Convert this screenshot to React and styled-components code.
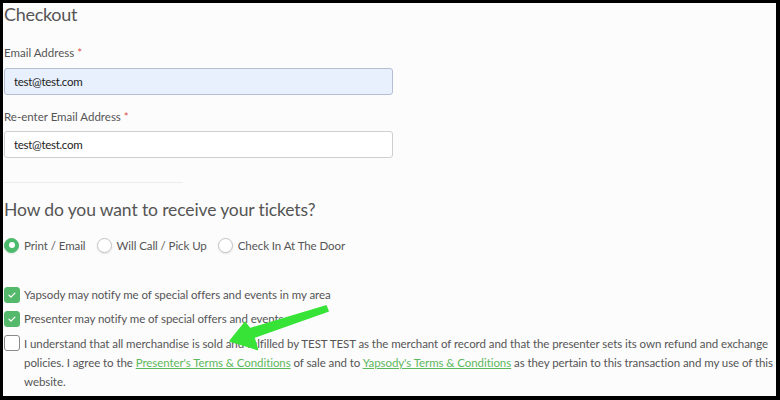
import styled, { createGlobalStyle } from "styled-components";

const GlobalStyle = createGlobalStyle`
  html, body {
    margin: 0;
    padding: 0;
    background: #000;
  }
  * {
    box-sizing: border-box;
  }
`;

const deliveryOptions = ["Print / Email", "Will Call / Pick Up", "Check In At The Door"];

const App = () => {
  return (
    <>
      <GlobalStyle />
      <Frame>
        <Title>Checkout</Title>
        <Label $top={20} $bottom={7}>
          Email Address <Required>*</Required>
        </Label>
        <Input $autofill defaultValue="test@test.com" />
        <Label $top={14} $bottom={6}>
          Re-enter Email Address <Required>*</Required>
        </Label>
        <Input defaultValue="test@test.com" />
        <Divider />
        <Heading>How do you want to receive your tickets?</Heading>
        <RadioRow>
          {deliveryOptions.map((opt, idx) => (
            <RadioOption key={opt}>
              <Radio $checked={idx === 0} />
              {opt}
            </RadioOption>
          ))}
        </RadioRow>
        <Options>
          <CheckRow>
            <Checkbox $checked>
              <CheckMark />
            </Checkbox>
            <CheckText>Yapsody may notify me of special offers and events in my area</CheckText>
          </CheckRow>
          <CheckRow>
            <Checkbox $checked>
              <CheckMark />
            </Checkbox>
            <CheckText>Presenter may notify me of special offers and events</CheckText>
          </CheckRow>
          <CheckRow>
            <Checkbox />
            <AgreeText>
              I understand that all merchandise is sold and fulfilled by TEST TEST as the merchant of
              record and that the presenter sets its own refund and exchange policies. I agree to the{" "}
              <Link>Presenter's Terms &amp; Conditions</Link> of sale and to{" "}
              <Link>Yapsody's Terms &amp; Conditions</Link> as they pertain to this transaction and my
              use of this website.
            </AgreeText>
          </CheckRow>
        </Options>
        <Arrow />
      </Frame>
    </>
  );
};

export default App;

const CheckMark = () => (
  <svg width="10" height="10" viewBox="0 0 24 24" fill="none" stroke="#fff" strokeWidth="3" strokeLinecap="round" strokeLinejoin="round">
    <path d="M5 12.5l4.5 4.5L19 7.5" />
  </svg>
);

// annotation arrow drawn over the page
const Arrow = () => (
  <ArrowSvg viewBox="3 3 773 393" width="773" height="393">
    <polygon
      points="326,305.8 250,328.6 245,322.5 230,341 257.5,349.5 254,337.4 328.2,311.2"
      fill="#37e337"
      stroke="#37e337"
      strokeWidth="1.4"
      strokeLinejoin="round"
    />
  </ArrowSvg>
);

const Frame = styled.div`
  position: relative;
  margin: 3px 4px 4px 3px;
  height: 393px;
  overflow: hidden;
  background: #fcfcfc;
  padding-left: 1px;
  font-family: Lato, "Open Sans", sans-serif;
  color: #555;
`;

const Title = styled.h1`
  margin: 0;
  font-size: 18px;
  line-height: 22px;
  letter-spacing: -0.3px;
  font-weight: 400;
  color: #555;
`;

const Label = styled.div`
  margin-top: ${(p) => p.$top}px;
  margin-bottom: ${(p) => p.$bottom}px;
  font-size: 11.5px;
  line-height: 16px;
`;

const Required = styled.span`
  color: #d9534f;
`;

const Input = styled.input`
  display: block;
  width: 389px;
  height: 27px;
  padding: 0 9px;
  border: 1px solid ${(p) => (p.$autofill ? "#b4bfd1" : "#cfcfcf")};
  border-radius: 3px;
  background: ${(p) => (p.$autofill ? "#e8f0fe" : "#fff")};
  font-family: Lato, "Open Sans", sans-serif;
  font-size: 11.5px;
  letter-spacing: -0.3px;
  color: #222;
  outline: none;
`;

const Divider = styled.div`
  width: 179px;
  height: 1px;
  margin-top: 24px;
  background: #ececec;
`;

const Heading = styled.h2`
  margin: 15px 0 0;
  font-size: 17.5px;
  line-height: 24px;
  letter-spacing: -0.12px;
  font-weight: 400;
  color: #555;
`;

const RadioRow = styled.div`
  display: flex;
  align-items: center;
  gap: 11px;
  margin-top: 14px;
  height: 18px;
`;

const RadioOption = styled.label`
  display: flex;
  align-items: center;
  gap: 5px;
  font-size: 11.5px;
  letter-spacing: -0.07px;
  color: #555;
`;

const Radio = styled.span`
  position: relative;
  width: 15px;
  height: 15px;
  border-radius: 50%;
  border: 1px solid ${(p) => (p.$checked ? "#4cbb6c" : "#c4c4c4")};
  background: ${(p) => (p.$checked ? "#4cbb6c" : "#fff")};
  box-shadow: 0 1px 2px rgba(0, 0, 0, 0.1);
  &::after {
    content: "";
    display: ${(p) => (p.$checked ? "block" : "none")};
    position: absolute;
    left: 50%;
    top: 50%;
    width: 6px;
    height: 6px;
    margin: -3px 0 0 -3px;
    border-radius: 50%;
    background: #fff;
  }
`;

const Options = styled.div`
  display: flex;
  flex-direction: column;
  gap: 6px;
  margin-top: 32px;
`;

const CheckRow = styled.div`
  display: flex;
  align-items: flex-start;
  gap: 4px;
`;

const Checkbox = styled.span`
  flex: none;
  display: flex;
  align-items: center;
  justify-content: center;
  width: 16px;
  height: 16px;
  margin-top: 1px;
  border-radius: 3px;
  border: 1px solid ${(p) => (p.$checked ? "#55b96b" : "#8a8a8a")};
  background: ${(p) => (p.$checked ? "#55b96b" : "#fff")};
`;

const CheckText = styled.span`
  font-size: 11.5px;
  line-height: 18px;
  letter-spacing: -0.07px;
  color: #555;
`;

const AgreeText = styled.p`
  flex: none;
  width: 762px;
  margin: 0;
  font-size: 11.5px;
  line-height: 19px;
  letter-spacing: -0.07px;
  color: #555;
`;

const Link = styled.a`
  color: #5cb85c;
  text-decoration: underline;
  cursor: pointer;
`;

const ArrowSvg = styled.svg`
  position: absolute;
  left: 0;
  top: 0;
  pointer-events: none;
`;
